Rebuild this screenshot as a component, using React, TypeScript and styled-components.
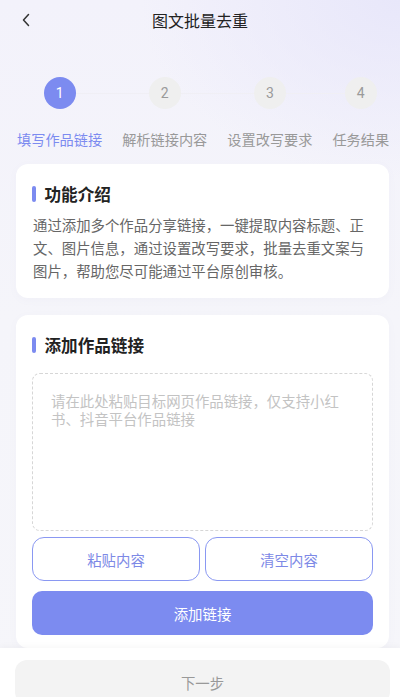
import React from "react";
import styled, { createGlobalStyle } from "styled-components";

const GlobalStyle = createGlobalStyle`
  * { box-sizing: border-box; }
  html, body { margin: 0; padding: 0; }
  body {
    font-family: "Noto Sans CJK SC", "Noto Sans", sans-serif;
    background:
      radial-gradient(ellipse 260px 180px at 100% 0, #e8e7fa 0%, rgba(232,231,250,0) 100%),
      linear-gradient(180deg, #f3f2fb 0px, #f5f5fa 320px, #f6f6fa 100%);
    min-height: 697px;
  }
`;

const PRIMARY = "#7c8bf0";

const Page = styled.div`
  display: flex;
  flex-direction: column;
  min-height: 697px;
`;

const Header = styled.header`
  height: 40px;
  display: flex;
  align-items: center;
  justify-content: center;
  position: relative;
`;

const BackButton = styled.button`
  position: absolute;
  left: 16px;
  top: 10px;
  width: 20px;
  height: 20px;
  padding: 0;
  border: none;
  background: none;
  display: flex;
  align-items: center;
  justify-content: center;
`;

const Title = styled.h1`
  margin: 0;
  font-size: 16px;
  font-weight: 400;
  color: #222;
  line-height: 24px;
`;

const Steps = styled.div`
  display: flex;
  gap: 20px;
  padding-left: 17px;
  margin-top: 37px;
  overflow: hidden;
  white-space: nowrap;
`;

const Step = styled.div<{ $first?: boolean }>`
  position: relative;
  display: flex;
  flex-direction: column;
  align-items: center;
  gap: 20px;
  flex-shrink: 0;
  &::before {
    content: "";
    display: ${(p) => (p.$first ? "none" : "block")};
    position: absolute;
    top: 15.5px;
    right: 50%;
    width: 105px;
    height: 1px;
    background: #f0eff5;
  }
`;

const Circle = styled.div<{ $active?: boolean }>`
  position: relative;
  z-index: 1;
  width: 32px;
  height: 32px;
  border-radius: 50%;
  background: ${(p) => (p.$active ? PRIMARY : "#efefef")};
  color: ${(p) => (p.$active ? "#fff" : "#9a9a9a")};
  display: flex;
  align-items: center;
  justify-content: center;
  font-family: "Roboto", "Noto Sans", sans-serif;
  font-size: 14px;
`;

const StepLabel = styled.div<{ $active?: boolean }>`
  font-size: 14.2px;
  line-height: 20px;
  color: ${(p) => (p.$active ? PRIMARY : "#999")};
`;

const Card = styled.section<{ $top: number; $pb: number }>`
  margin: ${(p) => p.$top}px 11px 0 16px;
  background: #fff;
  border-radius: 12px;
  padding: 18px 16px ${(p) => p.$pb}px;
  box-shadow: 0 2px 8px rgba(120, 120, 180, 0.04);
`;

const CardTitle = styled.h2`
  margin: 0;
  display: flex;
  align-items: center;
  gap: 9px;
  font-size: 16.6px;
  font-weight: 700;
  line-height: 24px;
  color: #222;
  &::before {
    content: "";
    width: 3.5px;
    height: 16px;
    border-radius: 2px;
    background: ${PRIMARY};
  }
`;

const Intro = styled.p`
  margin: 7px 0 0 1px;
  font-size: 14.4px;
  line-height: 23px;
  color: #666;
`;

const TextArea = styled.textarea`
  display: block;
  width: 100%;
  height: 158px;
  margin-top: 16px;
  padding: 18px 26px 18px 18px;
  border: 1px dashed #d6d6d6;
  border-radius: 8px;
  resize: none;
  outline: none;
  font-family: "Noto Sans CJK SC", "Noto Sans", sans-serif;
  font-size: 14.4px;
  line-height: 18px;
  color: #333;
  background: #fff;
  &::placeholder {
    color: #c3c3c3;
  }
`;

const ButtonRow = styled.div`
  display: grid;
  grid-template-columns: 1fr 1fr;
  gap: 5px;
  margin-top: 6px;
`;

const OutlineButton = styled.button`
  height: 44px;
  border: 1px solid #8a98f2;
  border-radius: 12px;
  background: #fff;
  color: #7d89e6;
  font-family: "Noto Sans CJK SC", "Noto Sans", sans-serif;
  font-size: 14.4px;
`;

const PrimaryButton = styled.button`
  display: block;
  width: 100%;
  height: 44px;
  margin-top: 10px;
  border: none;
  border-radius: 10px;
  background: ${PRIMARY};
  color: #fff;
  font-family: "Noto Sans CJK SC", "Noto Sans", sans-serif;
  font-size: 14.4px;
`;

const Footer = styled.footer`
  background: #fff;
  padding: 12px 10px 16px 15px;
  box-shadow: 0 -2px 6px rgba(0, 0, 0, 0.03);
`;

const NextButton = styled.button`
  display: block;
  width: 100%;
  height: 44px;
  border: none;
  border-radius: 12px;
  background: #f3f3f3;
  color: #999;
  font-family: "Noto Sans CJK SC", "Noto Sans", sans-serif;
  font-size: 14.4px;
`;

const steps = ["填写作品链接", "解析链接内容", "设置改写要求", "任务结果"];

export default function App() {
  return (
    <Page>
      <GlobalStyle />
      <Header>
        <BackButton aria-label="返回">
          <svg width="10" height="14" viewBox="0 0 10 14">
            <path d="M7.5 1.5 L2.5 7 L7.5 12.5" fill="none" stroke="#333" strokeWidth="1.5" strokeLinecap="round" strokeLinejoin="round" />
          </svg>
        </BackButton>
        <Title>图文批量去重</Title>
      </Header>

      <Steps>
        {steps.map((s, i) => (
          <Step key={s} $first={i === 0}>
            <Circle $active={i === 0}>{i + 1}</Circle>
            <StepLabel $active={i === 0}>{s}</StepLabel>
          </Step>
        ))}
      </Steps>

      <Card $top={15} $pb={16}>
        <CardTitle>功能介绍</CardTitle>
        <Intro>
          通过添加多个作品分享链接，一键提取内容标题、正文、图片信息，通过设置改写要求，批量去重文案与图片，帮助您尽可能通过平台原创审核。
        </Intro>
      </Card>

      <Card $top={17} $pb={13}>
        <CardTitle>添加作品链接</CardTitle>
        <TextArea placeholder="请在此处粘贴目标网页作品链接，仅支持小红书、抖音平台作品链接" />
        <ButtonRow>
          <OutlineButton>粘贴内容</OutlineButton>
          <OutlineButton>清空内容</OutlineButton>
        </ButtonRow>
        <PrimaryButton>添加链接</PrimaryButton>
      </Card>

      <Footer>
        <NextButton>下一步</NextButton>
      </Footer>
    </Page>
  );
}
